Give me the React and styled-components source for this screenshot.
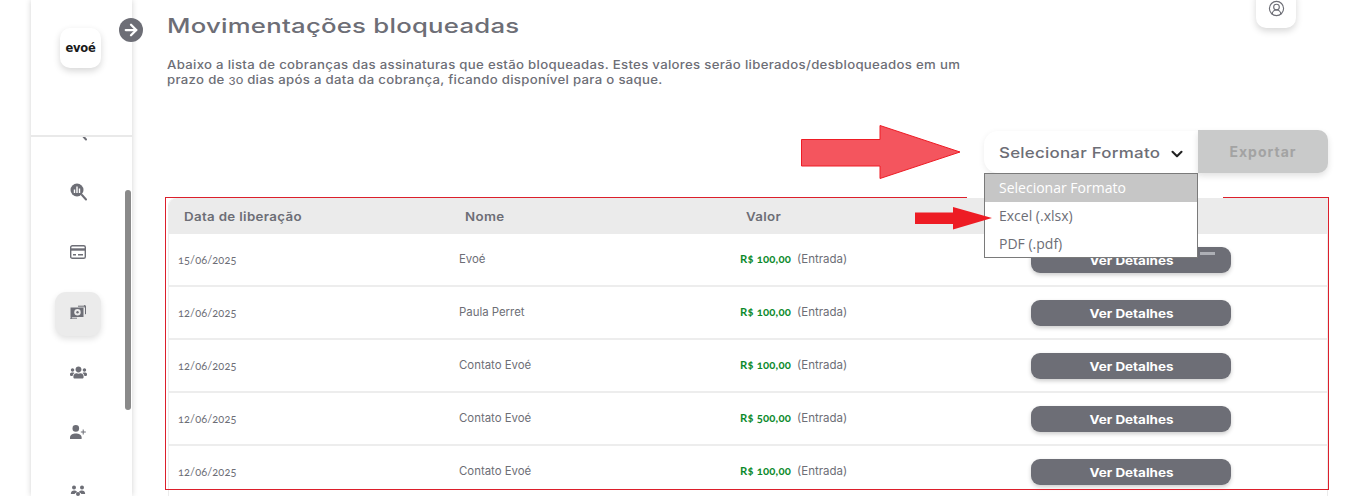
import React from "react";
import styled, { createGlobalStyle } from "styled-components";
import { FaUsers } from "react-icons/fa";
import { CircleUserRound, ArrowRight, ChevronDown } from "lucide-react";

const Global = createGlobalStyle`
  html, body { margin: 0; padding: 0; background: #fff; }
  body { font-family: "Inter", "Liberation Sans", sans-serif; color: #6d6e76; }
  * { box-sizing: border-box; }
`;

const Page = styled.div`
  position: relative;
  display: flex;
  width: 1346px;
  height: 496px;
  overflow: hidden;
  background: #fff;
`;

const Wide = styled.span`
  display: inline-block;
  white-space: nowrap;
  transform: scaleX(${(p) => p.$sx});
  transform-origin: ${(p) => p.$origin || "left"} center;
`;

const OldNum = styled.span`
  font-family: "Lato", sans-serif;
  font-variant-numeric: oldstyle-nums;
`;

const Sidebar = styled.aside`
  position: relative;
  flex: none;
  display: flex;
  flex-direction: column;
  width: 101px;
  height: 496px;
  margin-left: 31px;
  box-shadow: 0 0 6px rgba(0, 0, 0, 0.18);
  background: #fff;
`;

const LogoArea = styled.div`
  flex: none;
  height: 137px;
  border-bottom: 2px solid #e9e9e9;
  padding: 28px 0 0 29px;
`;

const Logo = styled.div`
  display: flex;
  align-items: center;
  justify-content: center;
  width: 41px;
  height: 40px;
  border-radius: 10px;
  background: #fff;
  box-shadow: 0 3px 7px rgba(0, 0, 0, 0.16);
  font-family: "DejaVu Sans", sans-serif;
  font-size: 11.5px;
  font-weight: 700;
  color: #1a1a1a;
  letter-spacing: -0.2px;
`;

const Toggle = styled.button`
  position: absolute;
  top: 18px;
  left: 88px;
  display: flex;
  align-items: center;
  justify-content: center;
  width: 24px;
  height: 24px;
  padding: 0;
  border: 0;
  border-radius: 50%;
  background: #6d6e76;
  color: #fff;
`;

const NavWindow = styled.nav`
  position: relative;
  flex: 1;
  overflow: hidden;
`;

const NavList = styled.div`
  display: flex;
  flex-direction: column;
  align-items: flex-start;
  gap: 14px;
  margin-top: -28px;
  padding-left: 24px;
`;

const NavItem = styled.div`
  flex: none;
  display: flex;
  align-items: center;
  justify-content: center;
  width: 46px;
  height: ${(p) => (p.$active ? "44px" : "46px")};
  margin: ${(p) => (p.$active ? "3px 0 -1px" : "0")};
  padding-bottom: ${(p) => (p.$active ? "4px" : "0")};
  border-radius: 11px;
  color: #6d6e76;
  background: ${(p) => (p.$active ? "#ebebeb" : "transparent")};
  box-shadow: ${(p) => (p.$active ? "0 3px 6px rgba(0,0,0,0.12)" : "none")};
`;

const ScrollThumb = styled.div`
  position: absolute;
  top: 53px;
  right: 1px;
  width: 6px;
  height: 220px;
  border-radius: 3px;
  background: #8a8a8a;
`;

const Main = styled.main`
  position: relative;
  flex: 1;
  min-width: 0;
  padding: 14px 18px 0 35px;
`;

const UserCard = styled.div`
  position: absolute;
  top: -12px;
  right: 50px;
  display: flex;
  align-items: center;
  justify-content: center;
  width: 40px;
  height: 40px;
  border-radius: 10px;
  background: #fff;
  box-shadow: 0 3px 7px rgba(0, 0, 0, 0.16);
  color: #6d6e76;
`;

const Title = styled.h1`
  margin: 0;
  height: 24px;
  font-size: 20px;
  line-height: 24px;
  font-weight: 500;
  letter-spacing: 0.2px;
  color: #6d6e76;
`;

const Intro = styled.p`
  margin: 19px 0 0;
  font-size: 12px;
  line-height: 15px;
  font-weight: 500;
  letter-spacing: 0.27px;
  color: #6d6e76;
  white-space: nowrap;
`;

const Toolbar = styled.div`
  position: relative;
  display: flex;
  justify-content: flex-end;
  margin-top: 43px;
  height: 43px;
`;

const SelectBox = styled.div`
  display: flex;
  align-items: center;
  justify-content: space-between;
  width: 214px;
  height: 42px;
  margin-top: 1px;
  padding: 0 12px 0 15px;
  border-radius: 14px 0 0 14px;
  background: #fff;
  box-shadow: 0 2px 6px rgba(0, 0, 0, 0.08);
  font-size: 14.5px;
  font-weight: 500;
  letter-spacing: 0.2px;
  color: #6d6e76;

  svg {
    margin-top: 3px;
  }
`;

const ExportButton = styled.button`
  width: 130px;
  height: 43px;
  border: 0;
  border-radius: 0 10px 10px 0;
  background: #c9caca;
  box-shadow: 0 3px 6px rgba(0, 0, 0, 0.12);
  font-family: inherit;
  font-size: 14px;
  font-weight: 700;
  letter-spacing: 1px;
  color: #a3a3a3;
`;

const Dropdown = styled.ul`
  position: absolute;
  z-index: 5;
  top: 43px;
  right: 130px;
  width: 214px;
  height: 85px;
  margin: 0;
  padding: 0;
  list-style: none;
  background: #fff;
  border: 1px solid #7a7a7a;
`;

const Option = styled.li`
  height: 28px;
  padding-left: 14px;
  font-family: "Open Sans", sans-serif;
  font-size: 14px;
  line-height: 28px;
  color: ${(p) => (p.$selected ? "#fff" : "#6d6e76")};
  background: ${(p) => (p.$selected ? "#c6c6c6" : "transparent")};
`;

const TableCard = styled.section`
  position: relative;
  margin: 25px 0 0 1px;
  width: 1160px;
  height: 320px;
  border: 1px solid #ececec;
  border-top: 0;
  border-radius: 8px 0 0 0;
`;

const GRID = "281px 281px 281px 1fr";

const HeaderRow = styled.div`
  display: grid;
  grid-template-columns: ${GRID};
  align-items: center;
  height: 36px;
  background: #ebebeb;
  border-radius: 8px 0 0 0;
  font-size: 12px;
  font-weight: 600;
  letter-spacing: 0.3px;
  color: #6d6e76;
`;

const HeaderCell = styled.div`
  padding-left: 15px;
  white-space: nowrap;
`;

const Row = styled.div`
  display: grid;
  grid-template-columns: ${GRID};
  align-items: center;
  height: 53px;
  padding-bottom: 1px;
  border-bottom: 2px solid #ededed;
  font-size: 11.4px;
  color: #6d6e76;
`;

const Cell = styled.div`
  padding-left: 9px;
  white-space: nowrap;
`;

const DateCell = styled(Cell)`
  font-family: "Lato", sans-serif;
  font-size: 11px;
  font-variant-numeric: oldstyle-nums;
  letter-spacing: 0.1px;
`;

const ActionCell = styled(Cell)`
  position: relative;
  padding: 2px 0 0 19px;
`;

const Amount = styled.span`
  font-family: "Lato", sans-serif;
  font-variant-numeric: oldstyle-nums;
  font-size: 11.3px;
  font-weight: 700;
  letter-spacing: 0.2px;
  color: #0b8a2c;
  margin-right: 6px;
`;

const Origin = styled.span`
  font-size: 11.5px;
`;

const DetailsButton = styled.button`
  display: block;
  width: 200px;
  height: 26px;
  padding: 0;
  border: 0;
  border-radius: 9px;
  background: #6d6e76;
  box-shadow: 0 2px 4px rgba(0, 0, 0, 0.2);
  font-family: inherit;
  font-size: 12px;
  font-weight: 700;
  color: #fff;
`;

const TextResidue = styled.i`
  position: absolute;
  top: 7px;
  left: 188px;
  width: 15px;
  height: 3px;
  background: #d9dbe0;
  opacity: 0.6;
`;

const HighlightFrame = styled.div`
  position: absolute;
  z-index: 2;
  left: 165px;
  top: 197px;
  width: 1164px;
  height: 293px;
  border: 1px solid #dc1f2b;
  border-top: 0;
  pointer-events: none;
`;

const FrameTop = styled.div`
  position: absolute;
  top: 0;
  left: -1px;
  right: -1px;
  height: 1px;
  background: linear-gradient(
    to right,
    #dc1f2b 0,
    #dc1f2b 802px,
    transparent 802px,
    transparent 1058px,
    #dc1f2b 1058px
  );
`;

const ArrowSvg = styled.svg`
  position: absolute;
  z-index: 6;
  left: ${(p) => p.$x}px;
  top: ${(p) => p.$y}px;
`;

const rows = [
  ["15/06/2025", "Evoé", "R$ 100,00"],
  ["12/06/2025", "Paula Perret", "R$ 100,00"],
  ["12/06/2025", "Contato Evoé", "R$ 100,00"],
  ["12/06/2025", "Contato Evoé", "R$ 500,00"],
  ["12/06/2025", "Contato Evoé", "R$ 100,00"],
];

const G = "#6d6e76";

const AnalyticsIcon = () => (
  <svg width="17" height="18" viewBox="0 0 17 18">
    <circle cx="7" cy="7" r="6.5" fill={G} />
    <path d="M12 12l4 4.5" stroke={G} strokeWidth="2" strokeLinecap="round" />
    <path d="M4.5 6.5v3.5M7 3.5V10M9.5 5.5V10" stroke="#fff" strokeWidth="1.4" />
  </svg>
);

const CardIcon = () => (
  <svg width="16" height="14" viewBox="0 0 16 14" fill="none">
    <rect x="0.7" y="0.7" width="14.6" height="12.6" rx="1.6" stroke={G} strokeWidth="1.4" />
    <path d="M1 4.5h14" stroke={G} strokeWidth="2.4" />
    <path d="M3 9.8h3M8 9.8h5" stroke={G} strokeWidth="1.4" />
  </svg>
);

const MoneyIcon = () => (
  <svg width="16" height="14" viewBox="0 0 16 14" fill="none">
    <path d="M0.5 2.5h13v9.5h-13z" fill={G} />
    <circle cx="7.5" cy="7.2" r="3.2" fill="#ebebeb" />
    <circle cx="7.5" cy="7.2" r="1.2" fill={G} />
    <path d="M8 1.2h7.5v8" stroke={G} strokeWidth="1" />
    <path d="M13.8 0l1.9 1.2-1.9 1.2M7 13.2H.6M2.2 12l-1.8 1.2 1.8 .8" stroke={G} strokeWidth="0.9" />
  </svg>
);

const PersonAddIcon = () => (
  <svg width="17" height="14" viewBox="0 0 17 14" fill={G}>
    <circle cx="5.8" cy="3.4" r="3.3" />
    <path d="M0 14v-1.6C0 9.8 2.8 8.4 5.8 8.4s5.8 1.4 5.8 4V14z" />
    <path d="M13.2 4.5v5M10.8 7h5" stroke={G} strokeWidth="1" fill="none" />
  </svg>
);

const TeamIcon = () => (
  <svg width="16" height="16" viewBox="0 0 16 16" fill={G}>
    <circle cx="8" cy="10" r="2" />
    <circle cx="4" cy="3.5" r="2" />
    <circle cx="12" cy="3.5" r="2" />
    <path d="M0.8 10c0-2.6 1.6-3.6 3.2-3.6S6.8 7 7.2 8.2C5.9 8.5 5 9 4.6 10zM15.2 10c0-2.6-1.6-3.6-3.200-3.6S9.2 7 8.8 8.2C10.1 8.5 11 9 11.4 10z" />
    <path d="M4 16c0-2.2 1.9-3 4-3s4 .8 4 3z" />
  </svg>
);

export default function App() {
  return (
    <Page>
      <Global />
      <Sidebar>
        <LogoArea>
          <Logo>evoé</Logo>
        </LogoArea>
        <Toggle aria-label="Expandir">
          <ArrowRight size={18} strokeWidth={3} />
        </Toggle>
        <NavWindow>
          <NavList>
            <NavItem><AnalyticsIcon /></NavItem>
            <NavItem><AnalyticsIcon /></NavItem>
            <NavItem><CardIcon /></NavItem>
            <NavItem $active><MoneyIcon /></NavItem>
            <NavItem><FaUsers size={17} /></NavItem>
            <NavItem><PersonAddIcon /></NavItem>
            <NavItem><TeamIcon /></NavItem>
          </NavList>
          <ScrollThumb />
        </NavWindow>
      </Sidebar>
      <Main>
        <UserCard>
          <CircleUserRound size={17} strokeWidth={1.6} />
        </UserCard>
        <Title>
          <Wide $sx={1.285}>Movimentações bloqueadas</Wide>
        </Title>
        <Intro>
          <Wide $sx={1.1}>
            Abaixo a lista de cobranças das assinaturas que estão bloqueadas. Estes valores serão liberados/desbloqueados em um
            <br />
            prazo de <OldNum>30</OldNum> dias após a data da cobrança, ficando disponível para o saque.
          </Wide>
        </Intro>
        <Toolbar>
          <SelectBox>
            <Wide $sx={1.167}>Selecionar Formato</Wide>
            <ChevronDown size={18} strokeWidth={2.8} color="#222" />
          </SelectBox>
          <ExportButton>Exportar</ExportButton>
          <Dropdown>
            <Option $selected>Selecionar Formato</Option>
            <Option>Excel (.xlsx)</Option>
            <Option>PDF (.pdf)</Option>
          </Dropdown>
        </Toolbar>
        <TableCard>
          <HeaderRow>
            <HeaderCell><Wide $sx={1.11}>Data de liberação</Wide></HeaderCell>
            <HeaderCell><Wide $sx={1.11}>Nome</Wide></HeaderCell>
            <HeaderCell><Wide $sx={1.11}>Valor</Wide></HeaderCell>
            <HeaderCell />
          </HeaderRow>
          {rows.map((r, i) => (
            <Row key={i}>
              <DateCell>{r[0]}</DateCell>
              <Cell>{r[1]}</Cell>
              <Cell>
                <Amount>{r[2]}</Amount>
                <Origin>(Entrada)</Origin>
              </Cell>
              <ActionCell>
                <DetailsButton>
                  <Wide $sx={1.12} $origin="center">Ver Detalhes</Wide>
                </DetailsButton>
                {i === 0 && <TextResidue />}
              </ActionCell>
            </Row>
          ))}
        </TableCard>
      </Main>
      <HighlightFrame>
        <FrameTop />
      </HighlightFrame>
      <ArrowSvg $x={800} $y={124} width="163" height="56" viewBox="0 0 163 56">
        <path d="M1.5 15.5H80V1.5L160 28 80 54.5V42H1.5z" fill="#f4555e" stroke="#ee1c25" strokeWidth="1" />
      </ArrowSvg>
      <ArrowSvg $x={915} $y={207} width="78" height="23" viewBox="0 0 78 23">
        <path d="M0 5.5H38V0L77 11 38 22.5V17H0z" fill="#ed1c24" />
      </ArrowSvg>
    </Page>
  );
}
